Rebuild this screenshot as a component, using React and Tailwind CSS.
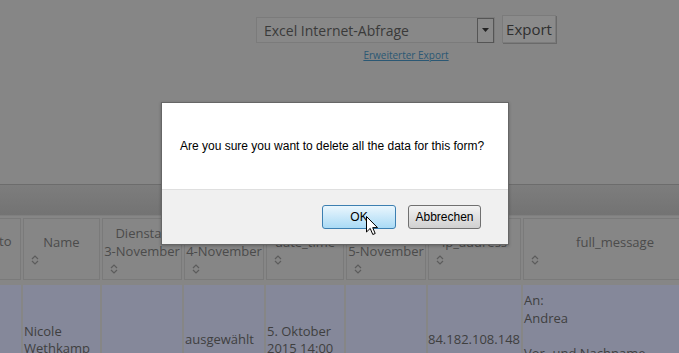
import React from "react";

function SortIcon() {
  return (
    <svg width="8" height="10" viewBox="0 0 8 10" className="block">
      <path d="M1 4 L4 1 L7 4" fill="none" stroke="#5c5c5c" strokeWidth="1.2" />
      <path d="M1 6 L4 9 L7 6" fill="none" stroke="#5c5c5c" strokeWidth="1.2" />
    </svg>
  );
}

function HeadCell({ w, lines }) {
  return (
    <div
      className={`${w} h-[62px] shrink-0 border border-[#7a7a7a] flex flex-col justify-center text-[13px] leading-[18px] text-[#4b4b4b] overflow-hidden`}
    >
      {lines.map((l, i) => (
        <div key={i} className="text-center whitespace-nowrap">
          {l}
        </div>
      ))}
      <div className="pl-[7px] pt-[4px]">
        <SortIcon />
      </div>
    </div>
  );
}

function Cell({ w, children, top }) {
  return (
    <div
      className={`${w} h-[110px] shrink-0 bg-[#85889a] flex flex-col ${top ? "justify-start pt-[7px]" : "justify-center"} px-[1px] text-[13px] leading-[17.5px] text-[#3f3f3f] overflow-hidden`}
    >
      {children}
    </div>
  );
}

export default function App() {
  return (
    <div
      className="relative w-[679px] h-[353px] overflow-hidden bg-[#868686]"
      style={{ fontFamily: '"Open Sans", sans-serif' }}
    >
      {/* export toolbar */}
      <div className="ml-[256px] w-[300px] pt-[15px] flex flex-col items-center">
        <div className="flex items-start gap-[7px]">
          <div className="w-[239px] h-[26px] mt-[2px] border border-[#7b7b7b] bg-[#888888] flex items-center justify-between">
            <span className="pl-[7px] text-[14px] text-[#3a3a3a] whitespace-nowrap">
              Excel Internet-Abfrage
            </span>
            <div className="w-[17px] h-[25px] border border-[#555] bg-[#8a8a8a] flex items-center justify-center">
              <svg width="7" height="4" viewBox="0 0 7 4">
                <path d="M0 0 L7 0 L3.5 4 Z" fill="#222" />
              </svg>
            </div>
          </div>
          <div className="w-[54px] h-[28px] border border-[#7b7b7b] bg-[#8b8b8b] shadow-[1px_1px_0_#6a6a6a] flex items-center justify-center text-[15px] text-[#2f2f2f]">
            Export
          </div>
        </div>
        <div className="mt-[5px] text-[10px] leading-[14px] text-[#2b5874] underline">
          Erweiterter Export
        </div>
      </div>

      <div className="mt-[93px] -ml-[5px] h-[14px] text-[13px] leading-[14px] text-[#3f4560]">t</div>

      {/* band */}
      <div className="mt-[15px] h-[32px] border-t border-[#6c6c6c] bg-gradient-to-b from-[#7d7d7d] to-[#737373] border-b border-b-[#7f7f7f]" />

      {/* table header */}
      <div className="mt-[2px] flex gap-[2px]">
        <div className="w-[21px] h-[62px] shrink-0 border border-l-0 border-[#7a7a7a] flex items-center text-[13px] text-[#4b4b4b]">
          <span className="-ml-[1px] -mt-[15px]">to</span>
        </div>
        <HeadCell w="w-[77px]" lines={["Name"]} />
        <HeadCell w="w-[80px]" lines={["Dienstag", "3-November"]} />
        <HeadCell w="w-[80px]" lines={["Mittwoch", "4-November"]} />
        <HeadCell w="w-[78px]" lines={["date_time"]} />
        <HeadCell w="w-[80px]" lines={["Donnerstag", "5-November"]} />
        <HeadCell w="w-[93px]" lines={["ip_address"]} />
        <HeadCell w="w-[184px]" lines={["full_message"]} />
      </div>

      {/* data row */}
      <div className="mt-[5px] flex gap-[2px]">
        <Cell w="w-[21px]" />
        <Cell w="w-[77px]">
          <div>Nicole</div>
          <div>Wethkamp</div>
        </Cell>
        <Cell w="w-[80px]" />
        <Cell w="w-[80px]">
          <div>ausgewählt</div>
        </Cell>
        <Cell w="w-[78px]">
          <div>5. Oktober</div>
          <div>2015 14:00</div>
        </Cell>
        <Cell w="w-[80px]" />
        <Cell w="w-[93px]">
          <div className="-ml-[1px]">84.182.108.148</div>
        </Cell>
        <Cell w="w-[184px]" top>
          <div>An:</div>
          <div>Andrea</div>
          <div>&nbsp;</div>
          <div>Vor- und Nachname</div>
          <div>Nicole Wethkamp</div>
        </Cell>
      </div>

      {/* confirm dialog */}
      <div
        className="absolute left-[161px] top-[102px] w-[348px] border border-[#666] bg-white shadow-[0_1px_3px_rgba(0,0,0,0.25)]"
        style={{ fontFamily: '"Liberation Sans", Arial, sans-serif' }}
      >
        <div className="h-[86px] flex items-center pl-[18px] text-[12px] text-black">
          Are you sure you want to delete all the data for this form?
        </div>
        <div className="h-[55px] border-t border-[#dfdfdf] bg-[#f0f0f0] flex justify-end items-start pt-[15px] pr-[27px] gap-[12px]">
          <div className="w-[74px] h-[24px] rounded-[3px] border border-[#3c7fb1] bg-gradient-to-b from-[#eaf6fd] to-[#a9daf5] flex items-center justify-center text-[12px] text-black">
            OK
          </div>
          <div className="w-[73px] h-[24px] rounded-[3px] border border-[#707070] bg-gradient-to-b from-[#f2f2f2] to-[#d0d0d0] flex items-center justify-center text-[12px] text-black">
            Abbrechen
          </div>
        </div>
      </div>

      {/* mouse cursor */}
      <svg
        className="absolute left-[366px] top-[216px]"
        width="13"
        height="20"
        viewBox="0 0 13 20"
      >
        <path
          d="M0.5 0.5 L0.5 16 L4.2 12.4 L6.8 18.5 L9.2 17.5 L6.7 11.6 L11.5 11.6 Z"
          fill="#fff"
          stroke="#000"
          strokeWidth="1"
          strokeLinejoin="round"
        />
      </svg>
    </div>
  );
}
